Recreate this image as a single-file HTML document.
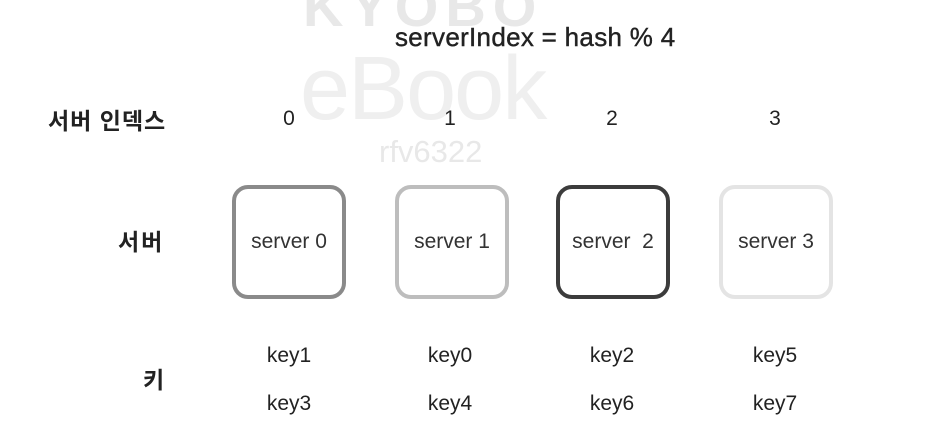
<!DOCTYPE html><html><head><meta charset="utf-8"><style>
body{margin:0;width:928px;height:444px;background:#fff;position:relative;overflow:hidden;font-family:"Liberation Sans","Noto Sans CJK KR",sans-serif;color:#222}
.a{position:absolute;white-space:nowrap}
.c{transform:translateX(-50%)}
.box{position:absolute;top:185px;width:106px;height:106px;border:4px solid;border-radius:16px;display:flex;align-items:center;justify-content:center;font-size:21px;color:#333}
.n{font-size:21px;top:107px}
.k{font-size:21px}
.l{font-size:23px;font-weight:bold;color:#222}
</style></head><body>
<div class="a" style="left:303px;top:-26px;font-size:56px;font-weight:bold;color:#e8e8e8;letter-spacing:7px">KYOBO</div>
<div class="a" style="left:300px;top:38px;font-size:90px;color:#efefef;letter-spacing:-2px">eBook</div>
<div class="a" style="left:379px;top:134px;font-size:31px;color:#e8e8e8">rfv6322</div>
<div class="a" style="left:395px;top:22px;font-size:26px;color:#222;-webkit-text-stroke:0.4px #222;letter-spacing:0.3px">serverIndex = hash % 4</div>
<div class="a l" style="left:48px;top:102px;letter-spacing:1px">서버 인덱스</div>
<div class="a l" style="left:118px;top:223px;letter-spacing:2px">서버</div>
<div class="a l" style="left:143px;top:361px">키</div>
<div class="a n c" style="left:289px">0</div><div class="a n c" style="left:450px">1</div><div class="a n c" style="left:612px">2</div><div class="a n c" style="left:775px">3</div>
<div class="box" style="left:232px;border-color:#8a8a8a">server 0</div>
<div class="box" style="left:395px;border-color:#bdbdbd">server 1</div>
<div class="box" style="left:556px;border-color:#3c3c3c">server&nbsp; 2</div>
<div class="box" style="left:719px;border-color:#e4e4e4">server 3</div>
<div class="a k c" style="left:289px;top:344px">key1</div><div class="a k c" style="left:450px;top:344px">key0</div><div class="a k c" style="left:612px;top:344px">key2</div><div class="a k c" style="left:775px;top:344px">key5</div>
<div class="a k c" style="left:289px;top:392px">key3</div><div class="a k c" style="left:450px;top:392px">key4</div><div class="a k c" style="left:612px;top:392px">key6</div><div class="a k c" style="left:775px;top:392px">key7</div>
</body></html>
